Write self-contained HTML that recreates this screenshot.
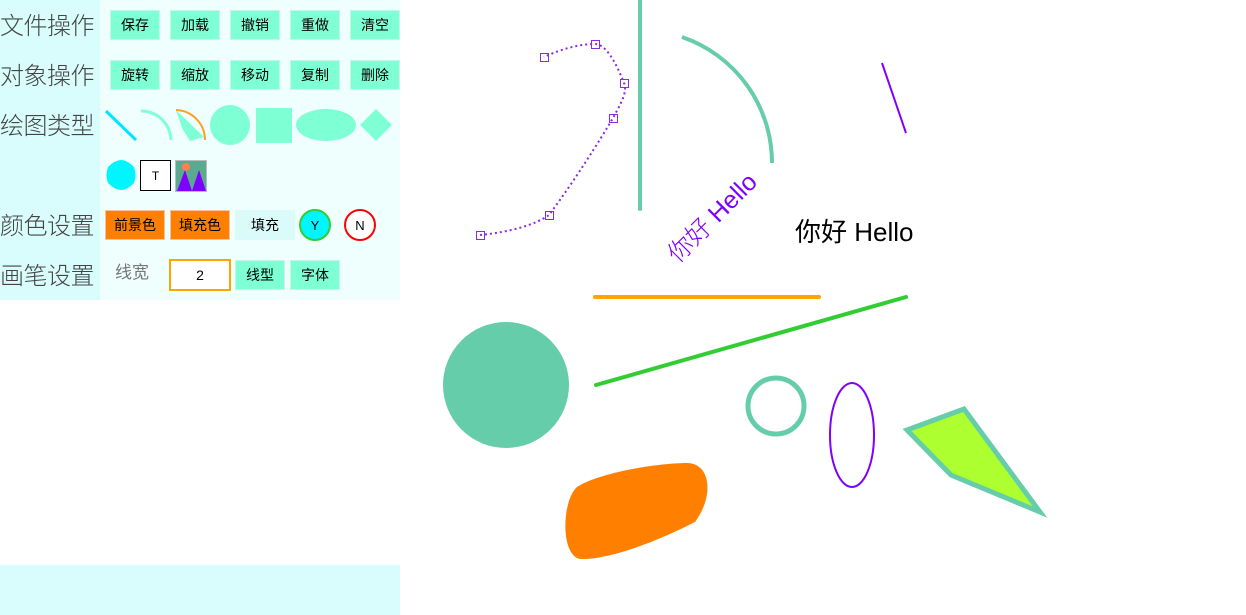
<!DOCTYPE html>
<html><head><meta charset="utf-8"><style>
body{margin:0;width:1246px;height:615px;background:#fff;position:relative;overflow:hidden;font-family:"Liberation Sans","Noto Sans CJK SC",sans-serif}
.lab{position:absolute;left:0;width:100px;background:#d9fdfd;color:#444;font-size:24px;line-height:48px;height:50px;font-family:"Noto Sans CJK SC",sans-serif;font-weight:300;letter-spacing:-0.5px}
.panel{position:absolute;left:0;top:0;width:400px;height:300px;background:#effffe}
.btn{position:absolute;height:30px;width:50px;background:#7fffd4;border:1px solid #c5f5e5;box-sizing:border-box;font-size:14px;text-align:center;line-height:28px;color:#000}
svg{position:absolute;left:0;top:0}
</style></head><body>
<div class="panel"></div>
<div class="lab" style="top:0">文件操作</div>
<div class="lab" style="top:50px">对象操作</div>
<div class="lab" style="top:100px">绘图类型</div>
<div class="lab" style="top:150px"></div>
<div class="lab" style="top:200px">颜色设置</div>
<div class="lab" style="top:250px">画笔设置</div>
<div style="position:absolute;left:0;top:565px;width:400px;height:50px;background:#d9fdfd"></div>

<div class="btn" style="left:110px;top:10px">保存</div>
<div class="btn" style="left:170px;top:10px">加载</div>
<div class="btn" style="left:230px;top:10px">撤销</div>
<div class="btn" style="left:290px;top:10px">重做</div>
<div class="btn" style="left:350px;top:10px">清空</div>
<div class="btn" style="left:110px;top:60px">旋转</div>
<div class="btn" style="left:170px;top:60px">缩放</div>
<div class="btn" style="left:230px;top:60px">移动</div>
<div class="btn" style="left:290px;top:60px">复制</div>
<div class="btn" style="left:350px;top:60px">删除</div>

<div class="btn" style="left:105px;top:210px;width:60px;background:#ff8000;border-color:#f5c0a0">前景色</div>
<div class="btn" style="left:170px;top:210px;width:60px;background:#ff8000;border-color:#f5c0a0">填充色</div>
<div class="btn" style="left:235px;top:210px;width:60px;background:#dbfbfb;border-color:#dbfbfb">填充</div>
<div style="position:absolute;left:115px;top:258px;font-size:17px;color:#777;line-height:30px">线宽</div>
<div style="position:absolute;left:169px;top:259px;width:62px;height:32px;box-sizing:border-box;border:2px solid #ffa500;background:#fff;text-align:center;line-height:28px;font-size:14px">2</div>
<div class="btn" style="left:235px;top:260px">线型</div>
<div class="btn" style="left:290px;top:260px">字体</div>

<svg width="1246" height="615">
<line x1="106" y1="111" x2="136" y2="140" stroke="#00e5ff" stroke-width="3"/>
<path d="M141 111 A30 30 0 0 1 171 140" fill="none" stroke="#7fffd4" stroke-width="3"/>
<path d="M176 110 L182 128 L190 141 L204 137 Z" fill="#7fffd4"/>
<path d="M176 110 A30 30 0 0 1 205 140" fill="none" stroke="#ffa020" stroke-width="2"/>
<circle cx="230" cy="125" r="20" fill="#7fffd4"/>
<rect x="256" y="108" width="36" height="35" fill="#7fffd4"/>
<ellipse cx="326" cy="125" rx="30" ry="16" fill="#7fffd4"/>
<path d="M376 109 L392 125 L376 141 L360 125 Z" fill="#7fffd4"/>
<path d="M121 160 Q127 160 134 167 Q137 175 134 183 Q127 190 121 190 Q115 190 108 183 Q105 175 108 167 Q115 160 121 160Z" fill="#00f5ff"/>
<rect x="140.5" y="160.5" width="30" height="30" fill="#fff" stroke="#000"/>
<text x="155.5" y="180" font-size="12" text-anchor="middle" font-family="Liberation Sans">T</text>
<rect x="175.5" y="160.5" width="31" height="31" fill="#5aaa90" stroke="#bbb"/>
<circle cx="186" cy="167" r="4" fill="#ff7f50"/>
<path d="M177 191 L185 170 L192 191 Z M192 191 L199 170 L206 191Z" fill="#8000ff"/>
<circle cx="315" cy="225" r="15" fill="#00f5ff" stroke="#32cd32" stroke-width="2"/>
<text x="315" y="230" font-size="13" text-anchor="middle">Y</text>
<circle cx="360" cy="225" r="15" fill="#fff" stroke="#ff0000" stroke-width="2"/>
<text x="360" y="230" font-size="13" text-anchor="middle">N</text>

<line x1="640" y1="0" x2="640" y2="209" stroke="#66cdaa" stroke-width="4" stroke-linecap="round"/>
<path d="M682 37 A133 133 0 0 1 772 163" fill="none" stroke="#66cdaa" stroke-width="4"/>
<line x1="882" y1="63" x2="906" y2="133" stroke="#8000ff" stroke-width="2"/>
<path d="M480 235 C510 232 535 225 549 215 C575 180 600 140 613 118 C620 105 628 92 624 83 C615 60 605 44 595 44 C575 44 555 52 544 57" fill="none" stroke="#8a2be2" stroke-width="2" stroke-dasharray="2 3"/>
<g fill="none" stroke="#8a2be2" stroke-width="1">
<rect x="540.5" y="53.5" width="8" height="8"/><rect x="591.5" y="40.5" width="8" height="8"/><rect x="620.5" y="79.5" width="8" height="8"/><rect x="609.5" y="114.5" width="8" height="8"/><rect x="545.5" y="211.5" width="8" height="8"/><rect x="476.5" y="231.5" width="8" height="8"/></g>
<text x="0" y="0" font-size="25" fill="#8000ff" transform="translate(678,264) rotate(-45)" font-family="Liberation Sans,Noto Sans CJK SC,sans-serif" font-weight="300">你好 Hello</text>
<text x="795" y="241" font-size="26" fill="#000" font-family="Liberation Sans,Noto Sans CJK SC,sans-serif">你好 Hello</text>
<line x1="595" y1="297" x2="819" y2="297" stroke="#ffa500" stroke-width="4" stroke-linecap="round"/>
<line x1="596" y1="385" x2="906" y2="297" stroke="#32cd32" stroke-width="4" stroke-linecap="round"/>
<circle cx="506" cy="385" r="63" fill="#66cdaa"/>
<circle cx="776" cy="406" r="28" fill="none" stroke="#66cdaa" stroke-width="5"/>
<ellipse cx="852" cy="435" rx="22" ry="52" fill="none" stroke="#8000ff" stroke-width="2"/>
<path d="M907 430 L964 409 L1040 512 L951 475 Z" fill="#adff2f" stroke="#66cdaa" stroke-width="5"/>
<path d="M577 487 C600 472 660 463 687 463 C710 463 715 495 695 522 C660 540 610 560 580 559 C560 555 562 500 577 487 Z" fill="#ff8000"/>
</svg>
</body></html>
